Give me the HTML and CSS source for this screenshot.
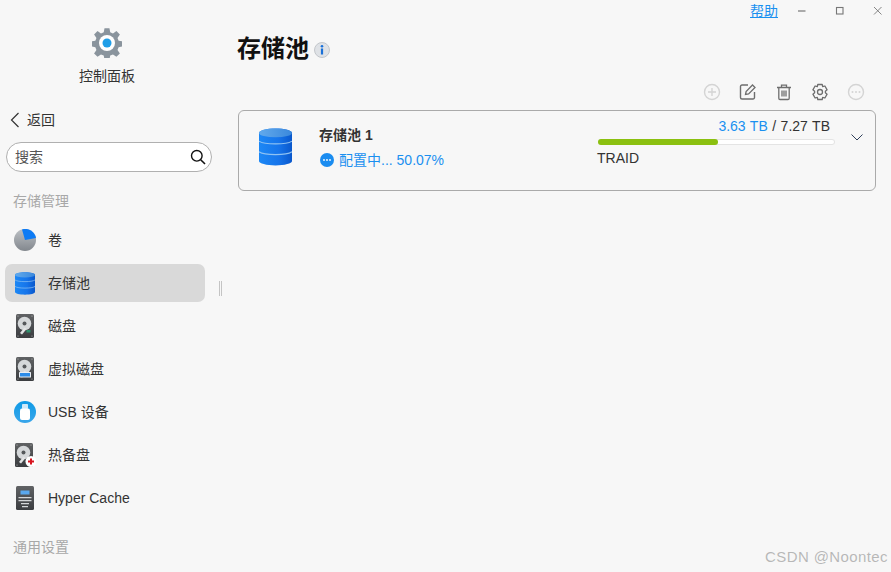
FILE: index.html
```html
<!DOCTYPE html>
<html lang="zh-CN">
<head>
<meta charset="utf-8">
<title>存储池</title>
<link rel="stylesheet" href="styles.css">
</head>
<body>
<svg class="defs" width="0" height="0" aria-hidden="true">
  <defs>
    <linearGradient id="cyl" x1="0" x2="1" y1="0" y2="0"><stop offset="0" stop-color="#1d88f5"/><stop offset=".6" stop-color="#1674ea"/><stop offset="1" stop-color="#0a58cc"/></linearGradient>
    <linearGradient id="cyltop" x1="0" x2="1" y1="0" y2="0"><stop offset="0" stop-color="#62aaec"/><stop offset="1" stop-color="#3a88dc"/></linearGradient>
    <linearGradient id="pie" x1="0" x2="0" y1="0" y2="1"><stop offset="0" stop-color="#bcc0c4"/><stop offset="1" stop-color="#82878d"/></linearGradient>
    <linearGradient id="usb" x1="0" x2="0" y1="0" y2="1"><stop offset="0" stop-color="#0f9ae6"/><stop offset="1" stop-color="#3aa6ea"/></linearGradient>
    <linearGradient id="hdd" x1="0" x2="0" y1="0" y2="1"><stop offset="0" stop-color="#606264"/><stop offset="1" stop-color="#3b3d40"/></linearGradient>
    <symbol id="db" viewBox="0 0 34 38">
      <path d="M0 4.500C0 2 7.600 0 17 0s17 2 17 4.500v29c0 2.500-7.600 4.500-17 4.500S0 36 0 33.500z" fill="url(#cyl)"/>
      <ellipse cx="17" cy="4.500" rx="17" ry="4.500" fill="url(#cyltop)"/>
      <path d="M0 13c3 2 9 2.800 17 2.800S31 15 34 13M0 24c3 2 9 2.800 17 2.800S31 26 34 24" fill="none" stroke="#8fc2f2" stroke-width="1.200"/>
    </symbol>
    <symbol id="disk" viewBox="0 0 18 24">
      <rect width="18" height="24" rx="1.500" fill="url(#hdd)"/>
      <circle cx="2" cy="2" r=".6" fill="#bbb"/><circle cx="16" cy="2" r=".6" fill="#bbb"/><circle cx="2" cy="22" r=".6" fill="#bbb"/><circle cx="16" cy="22" r=".6" fill="#bbb"/>
      <circle cx="8.500" cy="9.500" r="6.800" fill="#d5d8da"/><circle cx="8.500" cy="9.500" r="2" fill="#55585b"/>
      <path d="M4 19l4.500-5.500 2 1.500-4.500 5.500z" fill="#e3e5e6"/>
    </symbol>
  </defs>
</svg>

<div class="app">
  <aside class="sidebar">
    <div class="brand">
      <svg class="brand-icon" viewBox="0 0 30 30">
        <path d="M12.500 0h5l.8 4.200 2.800 1.100 3.500-2.400 3.500 3.500-2.400 3.500 1.100 2.800 4.200.8v5l-4.200.8-1.100 2.800 2.400 3.500-3.500 3.500-3.500-2.400-2.800 1.100-.8 4.200h-5l-.8-4.200-2.800-1.100-3.500 2.400-3.500-3.500 2.400-3.500-1.100-2.800-4.200-.8v-5l4.200-.8 1.100-2.800-2.400-3.500 3.500-3.500 3.500 2.400 2.800-1.100z" fill="#8a949d" transform="translate(.2 .2) scale(.985)"/>
        <circle cx="15" cy="15" r="8" fill="#fff"/>
        <circle cx="15" cy="15" r="4.500" fill="#1f9ee8"/>
      </svg>
      <div class="brand-label">控制面板</div>
    </div>
    <div class="back">
      <svg class="back-icon" viewBox="0 0 10 16"><path d="M8.500 1L1.500 8l7 7" fill="none" stroke="#333" stroke-width="1.200"/></svg>
      <span>返回</span>
    </div>
    <div class="search">
      <span>搜索</span>
      <svg class="search-icon" viewBox="0 0 16 16"><circle cx="6.800" cy="6.800" r="5.300" fill="none" stroke="#111" stroke-width="1.400"/><path d="M10.700 10.700L15 15" stroke="#111" stroke-width="1.600"/></svg>
    </div>
    <div class="section first">存储管理</div>
    <nav class="nav">
      <div class="item">
        <svg class="ico" viewBox="0 0 22 22"><circle cx="11" cy="11" r="11" fill="url(#pie)"/><path d="M8 .4A11 11 0 0 1 22 9L11 11z" fill="#0d7bf5"/></svg>
        <span>卷</span>
      </div>
      <div class="item active">
        <svg class="ico db-small"><use href="#db"/></svg>
        <span>存储池</span>
      </div>
      <div class="item">
        <svg class="ico hd"><use href="#disk"/><rect x="10.500" y="16" width="4" height="2.500" fill="#2f8f6c"/></svg>
        <span>磁盘</span>
      </div>
      <div class="item">
        <svg class="ico hd"><use href="#disk"/><rect x="3" y="15" width="12" height="5.500" rx=".5" fill="#e8eef5"/><rect x="4" y="16" width="10" height="3.500" fill="#2b8be8"/></svg>
        <span>虚拟磁盘</span>
      </div>
      <div class="item">
        <svg class="ico" viewBox="0 0 22 22"><circle cx="11" cy="11" r="11" fill="url(#usb)"/><rect x="8" y="3" width="6" height="5" rx=".8" fill="#cfe9f9"/><rect x="6" y="7.500" width="10" height="11.500" rx="2" fill="#fff"/></svg>
        <span>USB 设备</span>
      </div>
      <div class="item">
        <svg class="ico hd spare" viewBox="0 0 22 25"><use href="#disk" width="18" height="24"/><circle cx="16" cy="18.500" r="5.500" fill="#fff"/><path d="M15 15.500h2v2h2v2h-2v2h-2v-2h-2v-2h2z" fill="#d8141e"/></svg>
        <span>热备盘</span>
      </div>
      <div class="item">
        <svg class="ico hd" viewBox="0 0 18 24"><rect width="18" height="24" rx="1.500" fill="url(#hdd)"/><rect x="4.500" y="4.500" width="9" height="4" fill="#5aa8ee"/><path d="M2.500 11h13v1.300h-13zM2.500 14h13v1.300h-13zM5 17h8v1.300H5zM6 20h6v1.300H6z" fill="#d4d6d8"/></svg>
        <span>Hyper Cache</span>
      </div>
    </nav>
    <div class="section last">通用设置</div>
    <div class="splitter"></div>
  </aside>

  <main class="main">
    <div class="topbar">
      <a class="help" href="#">帮助</a>
      <svg class="win" viewBox="0 0 10 10"><path d="M1 5h7.500" stroke="#777" stroke-width="1.200"/></svg>
      <svg class="win" viewBox="0 0 10 10"><rect x="1.500" y="1.500" width="6.500" height="6.500" fill="none" stroke="#777" stroke-width="1.100"/></svg>
      <svg class="win" viewBox="0 0 10 10"><path d="M1 1l7.500 7.500M8.500 1L1 8.500" stroke="#777" stroke-width=".9"/></svg>
    </div>
    <div class="title-row">
      <h1>存储池</h1>
      <svg class="info" viewBox="0 0 16 16"><circle cx="8" cy="8" r="7.500" fill="#dfe2e6" stroke="#b9bdc2" stroke-width=".8"/><circle cx="8" cy="4.200" r="1.300" fill="#1a70d8"/><rect x="6.900" y="6.500" width="2.200" height="6" fill="#1a70d8"/></svg>
    </div>
    <div class="toolbar">
      <svg class="tool" viewBox="0 0 18 18"><circle cx="9" cy="9" r="7.500" fill="none" stroke="#d4d4d4" stroke-width="1.400"/><path d="M9 5v8M5 9h8" stroke="#d4d4d4" stroke-width="1.400"/></svg>
      <svg class="tool" viewBox="0 0 18 18"><path d="M9 2H3a1.500 1.500 0 0 0-1.500 1.500v11A1.500 1.500 0 0 0 3 16h11a1.500 1.500 0 0 0 1.500-1.500V9" fill="none" stroke="#6e6e6e" stroke-width="1.400"/><path d="M6.500 11.500l.6-3L13.500 2l2.500 2.500-6.400 6.400z" fill="none" stroke="#6e6e6e" stroke-width="1.300"/></svg>
      <svg class="tool" viewBox="0 0 18 18"><path d="M2 4.500h14M6.500 4.500V2.200h5v2.300M3.800 4.500v10.800c0 .7.500 1.200 1.200 1.200h8c.7 0 1.200-.5 1.200-1.200V4.500M7 7.500v6M9 7.500v6M11 7.500v6" fill="none" stroke="#6e6e6e" stroke-width="1.300"/></svg>
      <svg class="tool" viewBox="0 0 18 18"><path d="M6.800 1.500h4.400l.5 2.200 2.200-.7 2.200 3.800-1.700 1.500v1.400l1.700 1.500-2.200 3.800-2.200-.7-.5 2.200H6.800l-.5-2.200-2.200.7-2.200-3.800 1.700-1.500V8.300L1.900 6.800 4.100 3l2.200.7z" fill="none" stroke="#6e6e6e" stroke-width="1.300" stroke-linejoin="round"/><circle cx="9" cy="9" r="2.500" fill="none" stroke="#6e6e6e" stroke-width="1.300"/></svg>
      <svg class="tool" viewBox="0 0 18 18"><circle cx="9" cy="9" r="7.500" fill="none" stroke="#d4d4d4" stroke-width="1.400"/><circle cx="5.500" cy="9" r="1" fill="#d4d4d4"/><circle cx="9" cy="9" r="1" fill="#d4d4d4"/><circle cx="12.500" cy="9" r="1" fill="#d4d4d4"/></svg>
    </div>
    <section class="card">
      <svg class="pool-icon"><use href="#db"/></svg>
      <div class="pool-info">
        <div class="pool-name">存储池 1</div>
        <div class="pool-status">
          <svg class="status-icon" viewBox="0 0 14 14"><circle cx="7" cy="7" r="7" fill="#1a8cf0"/><circle cx="4" cy="7" r=".9" fill="#fff"/><circle cx="7" cy="7" r=".9" fill="#fff"/><circle cx="10" cy="7" r=".9" fill="#fff"/></svg>
          <span>配置中... 50.07%</span>
        </div>
      </div>
      <div class="usage">
        <div class="usage-text"><span class="used">3.63 TB</span> / 7.27 TB</div>
        <div class="bar"><div class="bar-fill" style="width:50.6%"></div></div>
        <div class="raid">TRAID</div>
      </div>
      <svg class="chevron" viewBox="0 0 12 6.500"><path d="M.5.500L6 6l5.500-5.500" fill="none" stroke="#30405a" stroke-width="1"/></svg>
    </section>
  </main>
</div>
<div class="watermark">CSDN @Noontec</div>
</body>
</html>
```
FILE: styles.css
```css
* { box-sizing: border-box; }
html, body { height: 100%; }
body {
  margin: 0;
  overflow: hidden;
  background: #f7f7f7;
  color: #333;
  font: 14px/20px "Liberation Sans", "Noto Sans CJK SC", sans-serif;
}
.defs { position: absolute; }
.app { display: flex; height: 572px; }

.sidebar {
  position: relative;
  flex: 0 0 229px;
  display: flex;
  flex-direction: column;
  padding: 28px 0 0;
}
.brand {
  display: flex;
  flex-direction: column;
  align-items: center;
  width: 214px;
  gap: 8px;
}
.brand-icon { width: 30px; height: 30px; }
.brand-label { line-height: 20px; }
.back {
  display: flex;
  align-items: center;
  gap: 7px;
  margin: 24px 0 0 10px;
  height: 20px;
}
.back-icon { width: 10px; height: 16px; }
.search {
  display: flex;
  align-items: center;
  justify-content: space-between;
  width: 206px;
  height: 30px;
  margin: 12px 0 0 6px;
  padding: 0 5px 0 8px;
  background: #fff;
  border: 1px solid #b0b0b0;
  border-radius: 15px;
  color: #555;
}
.search-icon { width: 16px; height: 16px; }
.section { margin-left: 13px; color: #a8a8a8; }
.section.first { margin-top: 19px; }
.section.last { margin-top: 20px; }
.nav {
  display: flex;
  flex-direction: column;
  gap: 5px;
  width: 200px;
  margin: 10px 0 0 5px;
}
.item {
  display: flex;
  align-items: center;
  height: 38px;
  border-radius: 7px;
  padding-left: 9px;
}
.item.active { background: #d9d9d9; }
.ico { flex: none; width: 22px; height: 22px; margin-right: 12px; }
.db-small { width: 20px; height: 23px; margin: 0 13px 0 1px; }
.hd { width: 18px; height: 24px; margin: 0 14px 0 2px; }
.spare { width: 22px; height: 25px; margin: 0 11px 0 1px; }
.splitter {
  position: absolute;
  left: 219px;
  top: 281px;
  width: 3px;
  height: 15px;
  border-left: 1px solid #c4c4c4;
  border-right: 1px solid #c4c4c4;
}

.main { flex: 1; display: flex; flex-direction: column; }
.topbar {
  display: flex;
  align-items: center;
  justify-content: flex-end;
  height: 22px;
}
.help { color: #1a90f0; margin-right: 19px; text-decoration: underline; }
.win { width: 10px; height: 10px; margin-right: 28px; }
.win:last-child { margin-right: 8px; }
.title-row {
  display: flex;
  align-items: center;
  gap: 5px;
  height: 34px;
  margin: 10px 0 0 8px;
}
h1 { margin: 0; font-size: 24px; line-height: 34px; font-weight: 700; color: #111; }
.info { width: 16px; height: 16px; margin-top: 2px; }
.toolbar {
  display: flex;
  justify-content: flex-end;
  gap: 18px;
  height: 18px;
  margin-top: 17px;
  padding-right: 26px;
}
.tool { width: 18px; height: 18px; }
.card {
  display: flex;
  align-items: flex-start;
  height: 81px;
  margin: 9px 15px 0 9px;
  padding: 0 0 0 20px;
  border: 1px solid #aaa;
  border-radius: 6px;
}
.pool-icon { flex: none; width: 33px; height: 38px; margin-top: 17px; }
.pool-info { margin: 14px 0 0 27px; }
.pool-name { font-weight: 700; color: #333; }
.pool-status { display: flex; align-items: center; gap: 5px; margin-top: 5px; color: #1a90f0; }
.status-icon { width: 14px; height: 14px; margin-left: 1px; }
.usage { width: 237px; margin: 5px 0 0 auto; }
.usage-text { padding-right: 5px; text-align: right; word-spacing: .6px; }
.used { color: #1a90f0; }
.bar {
  height: 6px;
  margin-top: 3px;
  background: #fff;
  box-shadow: inset 0 0 0 1px #e4e4e4;
  border-radius: 3px;
}
.bar-fill { height: 6px; background: #8bc010; border-radius: 3px; }
.raid { margin: 3px 0 0 -1px; }
.chevron { flex: none; width: 12px; height: 6.500px; margin: 23px 12px 0 16px; }
.watermark {
  position: absolute;
  right: 3px;
  top: 547px;
  color: rgba(120, 120, 120, .5);
  font-size: 15px;
  letter-spacing: .4px;
}
```
